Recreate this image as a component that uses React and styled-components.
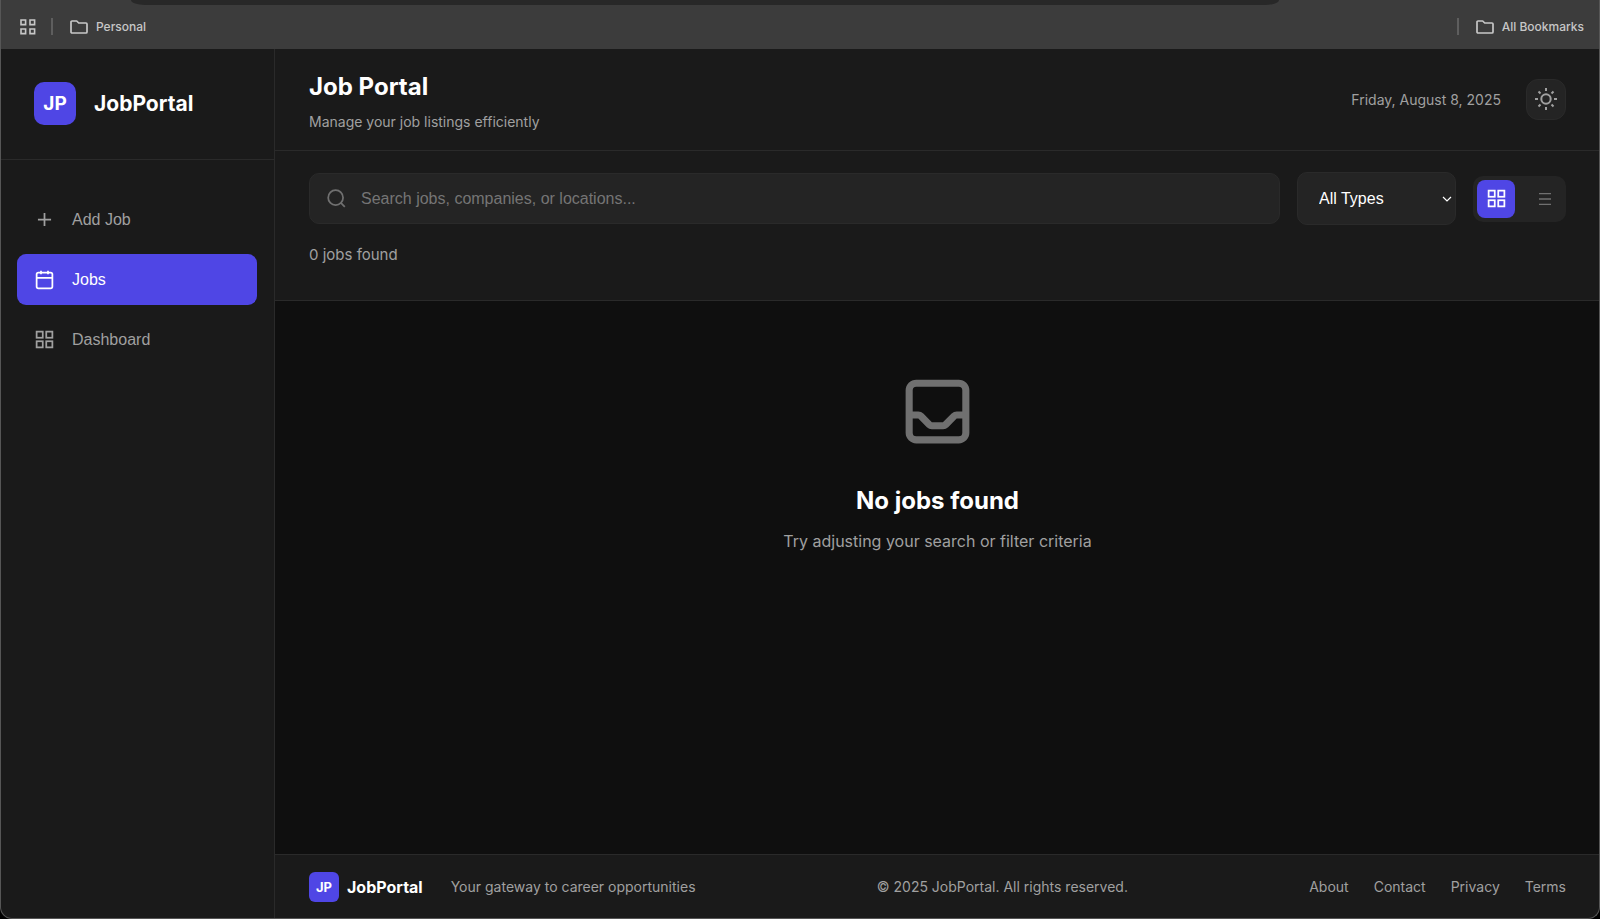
import React, { useState } from "react";
import styled, { createGlobalStyle } from "styled-components";

const ui = `Inter, "Liberation Sans", sans-serif`;
const control = `"Liberation Sans", Arial, sans-serif`;

const GlobalStyle = createGlobalStyle`
  *, *::before, *::after { box-sizing: border-box; }
  body { margin: 0; background: #000; color: #fff; font-family: ${ui}; }
  h1, h2, p { margin: 0; }
  button { font: inherit; cursor: pointer; }
`;

const Window = styled.div`
  display: flex;
  flex-direction: column;
  min-height: 100vh;
  border: 1px solid #565656;
  border-top: 0;
  border-radius: 0 0 12px 12px;
  background: #1a1a1a;
  overflow: hidden;
`;

const BookmarksBar = styled.div`
  position: relative;
  display: flex;
  align-items: center;
  height: 49px;
  padding: 4px 15px 0 19px;
  background: #3c3c3c;
  color: #c7c7c7;
`;

const AddressBarEdge = styled.div`
  position: absolute;
  top: 0;
  left: 130px;
  right: 320px;
  height: 5px;
  border-radius: 0 0 14px 14px / 0 0 5px 5px;
  background: #282828;
`;

const BarDivider = styled.span`
  width: 2px;
  height: 17px;
  margin: 0 17px 0 15px;
  background: #5e5e5e;
`;

const Bookmark = styled.button`
  display: flex;
  align-items: center;
  gap: 8px;
  padding: 0;
  border: 0;
  background: none;
  color: inherit;
  font-size: 12px;
  font-weight: 500;
  line-height: 18px;
`;

const Spacer = styled.div`
  flex: 1;
`;

const Body = styled.div`
  display: flex;
  flex: 1;
`;

const Sidebar = styled.aside`
  flex: 0 0 274px;
  border-right: 1px solid #2a2a2a;
`;

const Brand = styled.div`
  display: flex;
  align-items: center;
  gap: ${(p) => (p.$small ? 8 : 18)}px;
  ${(p) => !p.$small && "height: 111px; padding: 0 33px 1px; border-bottom: 1px solid #2a2a2a;"}
`;

const BrandMark = styled.span`
  display: grid;
  place-items: center;
  width: ${(p) => (p.$small ? 30 : 42)}px;
  height: ${(p) => (p.$small ? 30 : 43)}px;
  border-radius: ${(p) => (p.$small ? 6 : 10)}px;
  background: #4f46e5;
  color: #fff;
  font-size: ${(p) => (p.$small ? 13 : 19)}px;
  font-weight: 700;
`;

const BrandName = styled.span`
  color: #fff;
  font-size: ${(p) => (p.$small ? 16 : 21)}px;
  font-weight: 700;
`;

const Nav = styled.nav`
  display: flex;
  flex-direction: column;
  gap: 9px;
  padding: 34px 17px 34px 16px;
`;

const NavItem = styled.button`
  display: flex;
  align-items: center;
  gap: 17px;
  height: 51px;
  padding: 0 17px;
  border: 0;
  border-radius: 9px;
  background: ${(p) => (p.$active ? "#4f46e5" : "transparent")};
  color: ${(p) => (p.$active ? "#fff" : "#a0a0a0")};
  font-family: ${control};
  font-size: 16px;
`;

const Main = styled.main`
  display: flex;
  flex: 1;
  flex-direction: column;
  min-width: 0;
`;

const Header = styled.header`
  display: flex;
  align-items: center;
  justify-content: space-between;
  height: 102px;
  padding: 0 33px 0 34px;
  border-bottom: 1px solid #2a2a2a;
`;

const Heading = styled.div`
  padding-top: 3px;
`;

const Title = styled.h1`
  font-size: 24px;
  font-weight: 700;
  line-height: 34px;
`;

const Subtitle = styled.p`
  margin-top: 7px;
  color: #a0a0a0;
  font-size: 14px;
  line-height: 22px;
`;

const HeaderSide = styled.div`
  display: flex;
  align-items: center;
  gap: 25px;
  padding-bottom: 1px;
  color: #a0a0a0;
  font-size: 14px;
`;

const ThemeButton = styled.button`
  display: grid;
  place-items: center;
  width: 40px;
  height: 41px;
  padding: 0;
  border: 1px solid #2a2a2a;
  border-radius: 12px;
  background: #242424;
  color: #a0a0a0;
`;

const Toolbar = styled.section`
  height: 150px;
  padding: 21px 33px 0 34px;
  border-bottom: 1px solid #2a2a2a;
`;

const Filters = styled.div`
  display: flex;
  align-items: center;
  gap: 17px;
`;

const SearchBox = styled.label`
  display: flex;
  flex: 1;
  align-items: center;
  gap: 14px;
  height: 51px;
  padding: 0 16px;
  border: 1px solid #2a2a2a;
  border-radius: 10px;
  background: #242424;
  color: #707070;
`;

const SearchInput = styled.input`
  flex: 1;
  min-width: 0;
  padding: 0;
  border: 0;
  outline: 0;
  background: none;
  color: #fff;
  font-family: ${control};
  font-size: 16px;
  &::placeholder { color: #757575; opacity: 1; }
`;

const SelectBox = styled.div`
  position: relative;
  width: 159px;
  svg {
    position: absolute;
    top: 24px;
    right: 4px;
    pointer-events: none;
  }
`;

const Select = styled.select`
  appearance: none;
  width: 100%;
  height: 53px;
  padding: 0 21px;
  border: 1px solid #2a2a2a;
  border-radius: 10px;
  background: #242424;
  color: #fff;
  font-family: ${control};
  font-size: 16px;
`;

const ViewToggle = styled.div`
  display: flex;
  justify-content: space-between;
  width: 93px;
  padding: 4px 2px 4px 4px;
  border-radius: 10px;
  background: #242424;
`;

const ViewButton = styled.button`
  display: grid;
  place-items: center;
  width: 38px;
  height: 38px;
  padding: 0;
  border: 0;
  border-radius: 8px;
  background: ${(p) => (p.$active ? "#4f46e5" : "transparent")};
  color: ${(p) => (p.$active ? "#fff" : "#707070")};
`;

const Count = styled.p`
  margin-top: 20px;
  color: #a0a0a0;
  font-size: 15px;
  line-height: 20px;
`;

const Empty = styled.section`
  display: flex;
  flex: 1;
  flex-direction: column;
  align-items: center;
  padding: 68px 33px 68px 34px;
  background: #0f0f0f;
  svg { color: #707070; }
`;

const EmptyTitle = styled.h2`
  margin-top: 30px;
  font-size: 24px;
  font-weight: 700;
  line-height: 34px;
`;

const EmptyText = styled.p`
  margin-top: 11px;
  color: #a0a0a0;
  font-size: 16px;
  line-height: 24px;
`;

const Footer = styled.footer`
  display: flex;
  align-items: center;
  justify-content: space-between;
  height: 64px;
  padding: 0 33px 0 34px;
  border-top: 1px solid #2a2a2a;
  color: #a0a0a0;
  font-size: 14px;
`;

const FooterBrand = styled.div`
  display: flex;
  align-items: center;
  gap: 28px;
`;

const FooterLinks = styled.nav`
  display: flex;
  align-items: center;
  gap: 25px;
`;

const FooterLink = styled.a`
  color: inherit;
  text-decoration: none;
`;

const Svg = ({ size = 21, children }) => (
  <svg width={size} height={size} viewBox="0 0 24 24" fill="none" stroke="currentColor" strokeWidth="2" aria-hidden="true">
    {children}
  </svg>
);

const GridIcon = () => (
  <Svg>
    <rect x="3" y="3" width="7" height="7" />
    <rect x="14" y="3" width="7" height="7" />
    <rect x="3" y="14" width="7" height="7" />
    <rect x="14" y="14" width="7" height="7" />
  </Svg>
);

const AppsIcon = () => (
  <svg width="16" height="16" viewBox="0 0 16 16" fill="none" stroke="currentColor" strokeWidth="1.6" aria-hidden="true">
    <path d="M1 1h4.6v4.6H1zM10 1h4.6v4.6H10zM1 10h4.6v4.6H1zM10 10h4.6v4.6H10z" />
  </svg>
);

const FolderIcon = () => (
  <svg width="18" height="14" viewBox="0 0 18 14" fill="none" stroke="currentColor" strokeWidth="1.7" strokeLinejoin="round" aria-hidden="true">
    <path d="M2 1h4.7l2 2H16a1 1 0 0 1 1 1v8a1 1 0 0 1-1 1H2a1 1 0 0 1-1-1V2a1 1 0 0 1 1-1z" />
  </svg>
);

const PlusIcon = () => (
  <Svg><path d="M12 4.5v15M4.5 12h15" /></Svg>
);

const CalendarIcon = () => (
  <Svg>
    <rect x="3" y="4" width="18" height="18" rx="2" />
    <path d="M3 10h18M8 2v4M16 2v4" />
  </Svg>
);

const SunIcon = () => (
  <Svg size={24}>
    <circle cx="12" cy="12" r="4.7" />
    <path d="M12 1v3M12 20v3M1 12h3M20 12h3M4.5 4.5l2 2M17.5 17.5l2 2M4.5 19.5l2-2M17.5 6.5l2-2" />
  </Svg>
);

const navItems = [
  { label: "Add Job", icon: <PlusIcon /> },
  { label: "Jobs", icon: <CalendarIcon /> },
  { label: "Dashboard", icon: <GridIcon /> },
];

export default function App() {
  const [page, setPage] = useState("Jobs");
  const [view, setView] = useState("grid");
  return (
    <>
      <GlobalStyle />
      <Window>
        <BookmarksBar>
          <AddressBarEdge />
          <Bookmark aria-label="Apps"><AppsIcon /></Bookmark>
          <BarDivider />
          <Bookmark><FolderIcon />Personal</Bookmark>
          <Spacer />
          <BarDivider />
          <Bookmark><FolderIcon />All Bookmarks</Bookmark>
        </BookmarksBar>
        <Body>
          <Sidebar>
            <Brand>
              <BrandMark>JP</BrandMark>
              <BrandName>JobPortal</BrandName>
            </Brand>
            <Nav>
              {navItems.map(({ label, icon }) => (
                <NavItem key={label} $active={page === label} onClick={() => setPage(label)}>
                  {icon}
                  {label}
                </NavItem>
              ))}
            </Nav>
          </Sidebar>
          <Main>
            <Header>
              <Heading>
                <Title>Job Portal</Title>
                <Subtitle>Manage your job listings efficiently</Subtitle>
              </Heading>
              <HeaderSide>
                <span>Friday, August 8, 2025</span>
                <ThemeButton aria-label="Switch theme"><SunIcon /></ThemeButton>
              </HeaderSide>
            </Header>
            <Toolbar>
              <Filters>
                <SearchBox>
                  <Svg>
                    <circle cx="11" cy="11" r="8.5" />
                    <path d="M17 17l4.5 4.5" />
                  </Svg>
                  <SearchInput type="text" aria-label="Search jobs" placeholder="Search jobs, companies, or locations..." />
                </SearchBox>
                <SelectBox>
                  <Select aria-label="Job type"><option>All Types</option></Select>
                  <svg width="10" height="7" viewBox="0 0 10 7" fill="none" stroke="#fff" strokeWidth="1.2" aria-hidden="true">
                    <path d="M1 1l4 4 4-4" />
                  </svg>
                </SelectBox>
                <ViewToggle>
                  <ViewButton aria-label="Grid view" $active={view === "grid"} onClick={() => setView("grid")}>
                    <GridIcon />
                  </ViewButton>
                  <ViewButton aria-label="List view" $active={view === "list"} onClick={() => setView("list")}>
                    <Svg size={16}><path d="M3 4h18M3 12h18M3 20h18" /></Svg>
                  </ViewButton>
                </ViewToggle>
              </Filters>
              <Count>0 jobs found</Count>
            </Toolbar>
            <Empty>
              <Svg size={85}>
                <path
                  strokeLinecap="round"
                  strokeLinejoin="round"
                  d="M20 13V6a2 2 0 00-2-2H6a2 2 0 00-2 2v7m16 0v5a2 2 0 01-2 2H6a2 2 0 01-2-2v-5m16 0h-2.586a1 1 0 00-.707.293l-2.414 2.414a1 1 0 01-.707.293h-3.172a1 1 0 01-.707-.293l-2.414-2.414A1 1 0 006.586 13H4"
                />
              </Svg>
              <EmptyTitle>No jobs found</EmptyTitle>
              <EmptyText>Try adjusting your search or filter criteria</EmptyText>
            </Empty>
            <Footer>
              <FooterBrand>
                <Brand $small>
                  <BrandMark $small>JP</BrandMark>
                  <BrandName $small>JobPortal</BrandName>
                </Brand>
                <span>Your gateway to career opportunities</span>
              </FooterBrand>
              <span>© 2025 JobPortal. All rights reserved.</span>
              <FooterLinks>
                <FooterLink href="#about">About</FooterLink>
                <FooterLink href="#contact">Contact</FooterLink>
                <FooterLink href="#privacy">Privacy</FooterLink>
                <FooterLink href="#terms">Terms</FooterLink>
              </FooterLinks>
            </Footer>
          </Main>
        </Body>
      </Window>
    </>
  );
}
